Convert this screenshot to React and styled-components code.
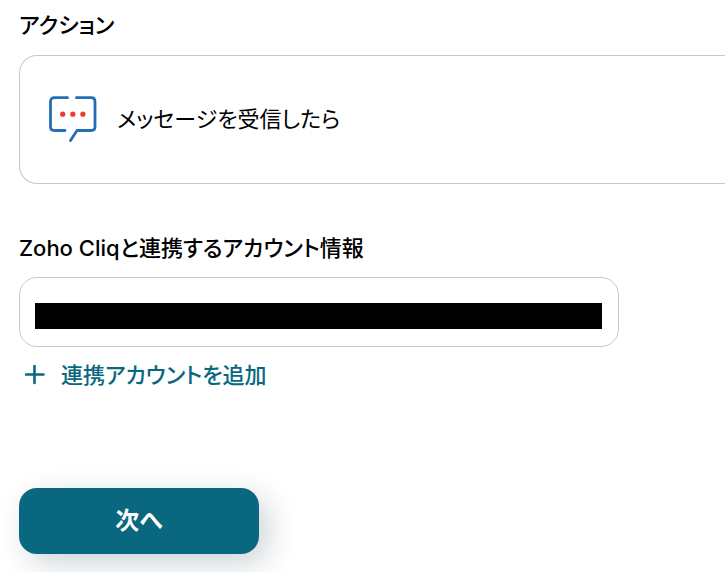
import React from 'react'
import styled, { createGlobalStyle } from 'styled-components'

const GlobalStyle = createGlobalStyle`
    * {
        box-sizing: border-box;
    }

    body {
        margin: 0;
        background: #fff;
        color: #000;
        font-family: Inter, "Noto Sans CJK JP", sans-serif;
        font-size: 22px;
        line-height: 30px;
        font-feature-settings: "palt";
    }
`;

const Form = styled.form`
    display: flex;
    flex-direction: column;
    align-items: flex-start;
    padding: 10px 0 18px 19px;
`;

const Section = styled.section`
    width: 100%;
    margin-bottom: ${props => props.$gap};
`;

const Title = styled.h2`
    margin: 0 0 15px;
    font-size: 22px;
    font-weight: 500;
    line-height: 30px;
`;

/* runs on past the right edge of the window */
const ActionCard = styled.div`
    display: flex;
    align-items: center;
    gap: 20px;
    padding: 39px 28px 41px;
    border: 1px solid #c8c8c8;
    border-right: 0;
    border-radius: 18px 0 0 18px;
`;

const ActionIcon = styled.svg`
    display: block;
    flex: none;
    width: 49px;
    height: 47px;
`;

const Label = styled.label`
    display: block;
    margin-bottom: 14px;
    font-weight: 500;
`;

/* the account name is blacked out */
const AccountInput = styled.input`
    display: block;
    width: 100%;
    max-width: 600px;
    height: 70px;
    padding: 25px 16px 17px 15px;
    border: 1px solid #c8c8c8;
    border-radius: 18px;
    background: linear-gradient(#000, #000) content-box, #fff;
    color: #000;
    font: inherit;
`;

const AddButton = styled.button`
    display: flex;
    align-items: center;
    gap: 16px;
    margin-top: 13px;
    padding: 0 6px;
    border: 0;
    background: none;
    color: #0a6780;
    font: inherit;
    font-weight: 500;
    font-feature-settings: inherit;
    cursor: pointer;
`;

const NextButton = styled.button`
    width: 240px;
    max-width: 100%;
    height: 66px;
    border: 0;
    border-radius: 18px;
    background: #0a6780;
    box-shadow: 9px 9px 30px rgba(10, 40, 60, 0.2);
    color: #fff;
    font: inherit;
    font-size: 24px;
    font-weight: 700;
    font-feature-settings: inherit;
    cursor: pointer;
`;

const App = () => (
    <>
        <GlobalStyle />
        <Form onSubmit={e => e.preventDefault()}>
            <Section $gap="49px">
                <Title>アクション</Title>
                <ActionCard>
                    <ActionIcon viewBox="0 0 49 47" fill="none" aria-hidden="true">
                        <g stroke="#236fb7" strokeWidth="2.800" strokeLinecap="round" strokeLinejoin="round">
                            <path d="M19.500 2.700H6.500Q2.500 2.700 2.500 6.700v25Q2.500 35.500 6.500 35.500H17" />
                            <path d="M28.500 2.700H43Q47 2.700 47 6.700v25Q47 35.500 43 35.500H29L22.500 45.500" />
                        </g>
                        <g fill="#ee3a36">
                            <circle cx="14.700" cy="19.200" r="2.600" />
                            <circle cx="24.800" cy="19.200" r="2.600" />
                            <circle cx="34.900" cy="19.200" r="2.600" />
                        </g>
                    </ActionIcon>
                    <span>メッセージを受信したら</span>
                </ActionCard>
            </Section>

            <Section $gap="98px">
                <Label htmlFor="account">Zoho Cliqと連携するアカウント情報</Label>
                <AccountInput id="account" type="text" readOnly />
                <AddButton type="button">
                    <svg width="20" height="20" viewBox="0 0 20 20" fill="none" aria-hidden="true">
                        <path d="M9.500 1v17M1 9.500h17.500" stroke="currentColor" strokeWidth="2.600" strokeLinecap="round" />
                    </svg>
                    連携アカウントを追加
                </AddButton>
            </Section>

            <NextButton type="submit">次へ</NextButton>
        </Form>
    </>
)

export default App
